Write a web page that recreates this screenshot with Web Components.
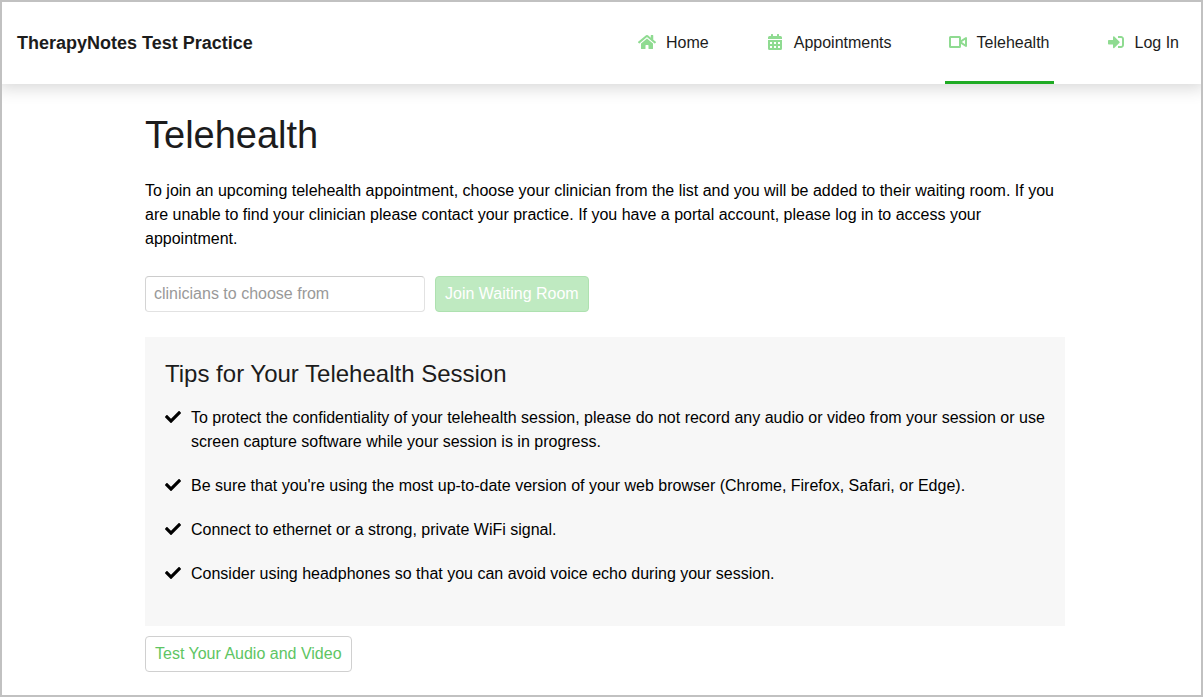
<!DOCTYPE html>
<html lang="en">
<head>
  <meta charset="utf-8">
  <meta name="viewport" content="width=device-width, initial-scale=1">
  <title>Telehealth - TherapyNotes Test Practice</title>
  <style>
    * {
      box-sizing: border-box;
    }

    body {
      margin: 0;
      min-height: 100vh;
      border: 2px solid #c1c1c1;
      background: #fff;
      color: #000;
      font: 16px/24px "Liberation Sans", Arial, sans-serif;
    }
  </style>
</head>
<body>
  <portal-header practice="TherapyNotes Test Practice">
    <portal-link icon="home" href="#home">Home</portal-link>
    <portal-link icon="calendar" href="#appointments">Appointments</portal-link>
    <portal-link icon="video" href="#telehealth" active>Telehealth</portal-link>
    <portal-link icon="login" href="#login">Log In</portal-link>
  </portal-header>

  <portal-page heading="Telehealth">
    <p>To join an upcoming telehealth appointment, choose your clinician from the list and you will be added to their waiting room. If you are unable to find your clinician please contact your practice. If you have a portal account, please log in to access your appointment.</p>
    <waiting-room-form></waiting-room-form>
    <tips-panel heading="Tips for Your Telehealth Session">
      <tip-item>To protect the confidentiality of your telehealth session, please do not record any audio or video from your session or use screen capture software while your session is in progress.</tip-item>
      <tip-item>Be sure that you're using the most up-to-date version of your web browser (Chrome, Firefox, Safari, or Edge).</tip-item>
      <tip-item>Connect to ethernet or a strong, private WiFi signal.</tip-item>
      <tip-item>Consider using headphones so that you can avoid voice echo during your session.</tip-item>
    </tips-panel>
    <portal-button>Test Your Audio and Video</portal-button>
  </portal-page>

  <script>
    const icons = {
      home: {
        box: "0 0 576 512",
        shape: `<path d="M280.37 148.26L96 300.11V464a16 16 0 0 0 16 16l112.06-.29a16 16 0 0 0 15.92-16V368a16 16 0 0 1 16-16h64a16 16 0 0 1 16 16v95.64a16 16 0 0 0 16 16.05L464 480a16 16 0 0 0 16-16V300L295.67 148.26a12.19 12.19 0 0 0-15.3 0zM571.6 251.47L488 182.56V44.05a12 12 0 0 0-12-12h-56a12 12 0 0 0-12 12v72.61L318.47 43a48 48 0 0 0-61 0L4.34 251.47a12 12 0 0 0-1.6 16.9l25.5 31A12 12 0 0 0 45.15 301l235.22-193.74a12.19 12.19 0 0 1 15.3 0L530.9 301a12 12 0 0 0 16.9-1.6l25.5-31a12 12 0 0 0-1.7-16.93z"/>`
      },
      calendar: {
        box: "0 0 448 512",
        shape: `<path fill-rule="evenodd" d="M0 192h448v272a48 48 0 0 1-48 48H48a48 48 0 0 1-48-48zM64 256v64h64v-64zM192 256v64h64v-64zM320 256v64h64v-64zM64 384v64h64v-64zM192 384v64h64v-64zM320 384v64h64v-64z"/>
          <path d="M448 160H0v-48a48 48 0 0 1 48-48h48V12A12 12 0 0 1 108 0h40a12 12 0 0 1 12 12v52h128V12a12 12 0 0 1 12-12h40a12 12 0 0 1 12 12v52h48a48 48 0 0 1 48 48z"/>`
      },
      video: {
        box: "0 0 576 512",
        shape: `<g fill="none" stroke="currentColor" stroke-width="64" stroke-linejoin="round">
          <rect x="32" y="96" width="320" height="320" rx="16"/>
          <path d="M392 226L544 128V384L392 286z"/>
          </g>`
      },
      login: {
        box: "0 0 512 512",
        shape: `<path d="M416 448h-84c-6.600 0-12-5.400-12-12v-40c0-6.600 5.400-12 12-12h84c17.700 0 32-14.300 32-32V160c0-17.700-14.300-32-32-32h-84c-6.600 0-12-5.400-12-12V76c0-6.600 5.400-12 12-12h84c53 0 96 43 96 96v192c0 53-43 96-96 96zm-47-201L201 79c-15-15-41-4.500-41 17v96H24c-13.300 0-24 10.700-24 24v96c0 13.300 10.700 24 24 24h136v96c0 21.500 26 32 41 17l168-168c9.300-9.400 9.300-24.600 0-34z"/>`
      },
      check: {
        box: "0 0 512 512",
        shape: `<path d="M173.898 439.404l-166.400-166.400c-9.997-9.997-9.997-26.206 0-36.204l36.203-36.204c9.997-9.998 26.207-9.998 36.204 0L192 312.690 432.095 72.596c9.997-9.997 26.207-9.997 36.204 0l36.203 36.204c9.997 9.997 9.997 26.206 0 36.204l-294.400 294.401c-9.998 9.997-26.207 9.997-36.204-.001z"/>`
      }
    };

    class PortalIcon extends HTMLElement {
      constructor() {
        super();
        this.shadowDOM = this.attachShadow({ mode: "open" });
      }

      connectedCallback() {
        const icon = icons[this.getAttribute("name")];

        this.shadowDOM.innerHTML = `
          <style>
            :host {
              display: flex;
              justify-content: center;
              align-items: center;
              flex: none;
            }

            svg {
              display: block;
              height: 16px;
              fill: currentColor;
            }
          </style>

          <svg viewBox="${icon.box}" aria-hidden="true">${icon.shape}</svg>
        `;
      }
    }

    class PortalLink extends HTMLElement {
      constructor() {
        super();
        this.shadowDOM = this.attachShadow({ mode: "open" });
      }

      connectedCallback() {
        this.shadowDOM.innerHTML = `
          <style>
            :host {
              display: flex;
            }

            a {
              display: flex;
              align-items: center;
              gap: 10px;
              padding: 0 4px;
              border-top: 3px solid transparent;
              border-bottom: 3px solid transparent;
              color: #1c1c1c;
              text-decoration: none;
              white-space: nowrap;
            }

            :host([active]) a,
            a:hover {
              border-bottom-color: #1fab24;
            }

            portal-icon {
              width: 18px;
              padding-bottom: 2px;
              color: #8fdb91;
            }
          </style>

          <a href="${this.getAttribute("href")}"${this.hasAttribute("active") ? ' aria-current="page"' : ""}>
            <portal-icon name="${this.getAttribute("icon")}"></portal-icon>
            <span><slot></slot></span>
          </a>
        `;
      }
    }

    class PortalHeader extends HTMLElement {
      constructor() {
        super();
        this.shadowDOM = this.attachShadow({ mode: "open" });
      }

      connectedCallback() {
        this.shadowDOM.innerHTML = `
          <style>
            :host {
              display: block;
              box-shadow: 0 0 16px 4px rgba(0, 0, 0, 0.16);
              clip-path: inset(0 0 -20px 0);
            }

            header {
              display: flex;
              justify-content: space-between;
              min-height: 82px;
              padding: 0 18px 0 15px;
            }

            .practice {
              align-self: center;
              color: #1c1c1c;
              font-size: 18px;
              font-weight: bold;
            }

            nav {
              display: flex;
              gap: 49px;
            }
          </style>

          <header>
            <div class="practice">${this.getAttribute("practice")}</div>
            <nav aria-label="Main"><slot></slot></nav>
          </header>
        `;
      }
    }

    class PortalPage extends HTMLElement {
      constructor() {
        super();
        this.shadowDOM = this.attachShadow({ mode: "open" });
      }

      connectedCallback() {
        this.shadowDOM.innerHTML = `
          <style>
            :host {
              display: block;
              padding: 28px 0 20px 7px;
            }

            main {
              max-width: 920px;
              margin: 0 auto;
            }

            h1 {
              margin: 0 0 21px;
              color: #1c1c1c;
              font-size: 38px;
              font-weight: normal;
              line-height: 46px;
            }

            ::slotted(p) {
              margin: 0 0 25px;
            }
          </style>

          <main>
            <h1>${this.getAttribute("heading")}</h1>
            <slot></slot>
          </main>
        `;
      }
    }

    class PortalButton extends HTMLElement {
      constructor() {
        super();
        this.shadowDOM = this.attachShadow({ mode: "open" });
      }

      connectedCallback() {
        this.shadowDOM.innerHTML = `
          <style>
            :host {
              display: inline-flex;
            }

            button {
              height: 36px;
              padding: 0 9px;
              border: 1px solid #d0d0d0;
              border-radius: 4px;
              background: #fff;
              color: #5ec563;
              font: inherit;
              cursor: pointer;
            }

            :host([primary]) button {
              border-color: #aee1b0;
              background: #bfeac1;
              color: #fff;
            }

            button:disabled {
              cursor: default;
            }
          </style>

          <button type="button"${this.hasAttribute("disabled") ? " disabled" : ""}><slot></slot></button>
        `;
      }
    }

    class WaitingRoomForm extends HTMLElement {
      constructor() {
        super();
        this.shadowDOM = this.attachShadow({ mode: "open" });
      }

      connectedCallback() {
        this.shadowDOM.innerHTML = `
          <style>
            :host {
              display: block;
              margin-bottom: 25px;
            }

            form {
              display: flex;
              gap: 10px;
            }

            input {
              box-sizing: border-box;
              width: 280px;
              height: 36px;
              padding: 0 8px;
              border: 1px solid #e2e2e2;
              border-top-color: #ccc;
              border-left-color: #d4d4d4;
              border-radius: 4px;
              font: inherit;
            }

            input::placeholder {
              color: #999;
            }
          </style>

          <form>
            <input type="text" name="clinician" aria-label="Clinician" placeholder="clinicians to choose from">
            <portal-button primary disabled>Join Waiting Room</portal-button>
          </form>
        `;
      }
    }

    class TipsPanel extends HTMLElement {
      constructor() {
        super();
        this.shadowDOM = this.attachShadow({ mode: "open" });
      }

      connectedCallback() {
        this.shadowDOM.innerHTML = `
          <style>
            :host {
              display: block;
              margin-bottom: 10px;
              padding: 22px 20px 40px;
              background: #f7f7f7;
            }

            h2 {
              margin: 0 0 17px;
              color: #1c1c1c;
              font-size: 24px;
              font-weight: normal;
              line-height: 30px;
            }

            .tips {
              display: flex;
              flex-direction: column;
              gap: 20px;
            }
          </style>

          <h2>${this.getAttribute("heading")}</h2>
          <div class="tips" role="list"><slot></slot></div>
        `;
      }
    }

    class TipItem extends HTMLElement {
      constructor() {
        super();
        this.shadowDOM = this.attachShadow({ mode: "open" });
      }

      connectedCallback() {
        this.setAttribute("role", "listitem");
        this.shadowDOM.innerHTML = `
          <style>
            :host {
              display: flex;
              align-items: flex-start;
              gap: 10px;
            }

            portal-icon {
              width: 16px;
              height: 22px;
            }
          </style>

          <portal-icon name="check"></portal-icon>
          <span><slot></slot></span>
        `;
      }
    }

    customElements.define("portal-icon", PortalIcon);
    customElements.define("portal-link", PortalLink);
    customElements.define("portal-header", PortalHeader);
    customElements.define("portal-page", PortalPage);
    customElements.define("portal-button", PortalButton);
    customElements.define("waiting-room-form", WaitingRoomForm);
    customElements.define("tips-panel", TipsPanel);
    customElements.define("tip-item", TipItem);
  </script>
</body>
</html>
